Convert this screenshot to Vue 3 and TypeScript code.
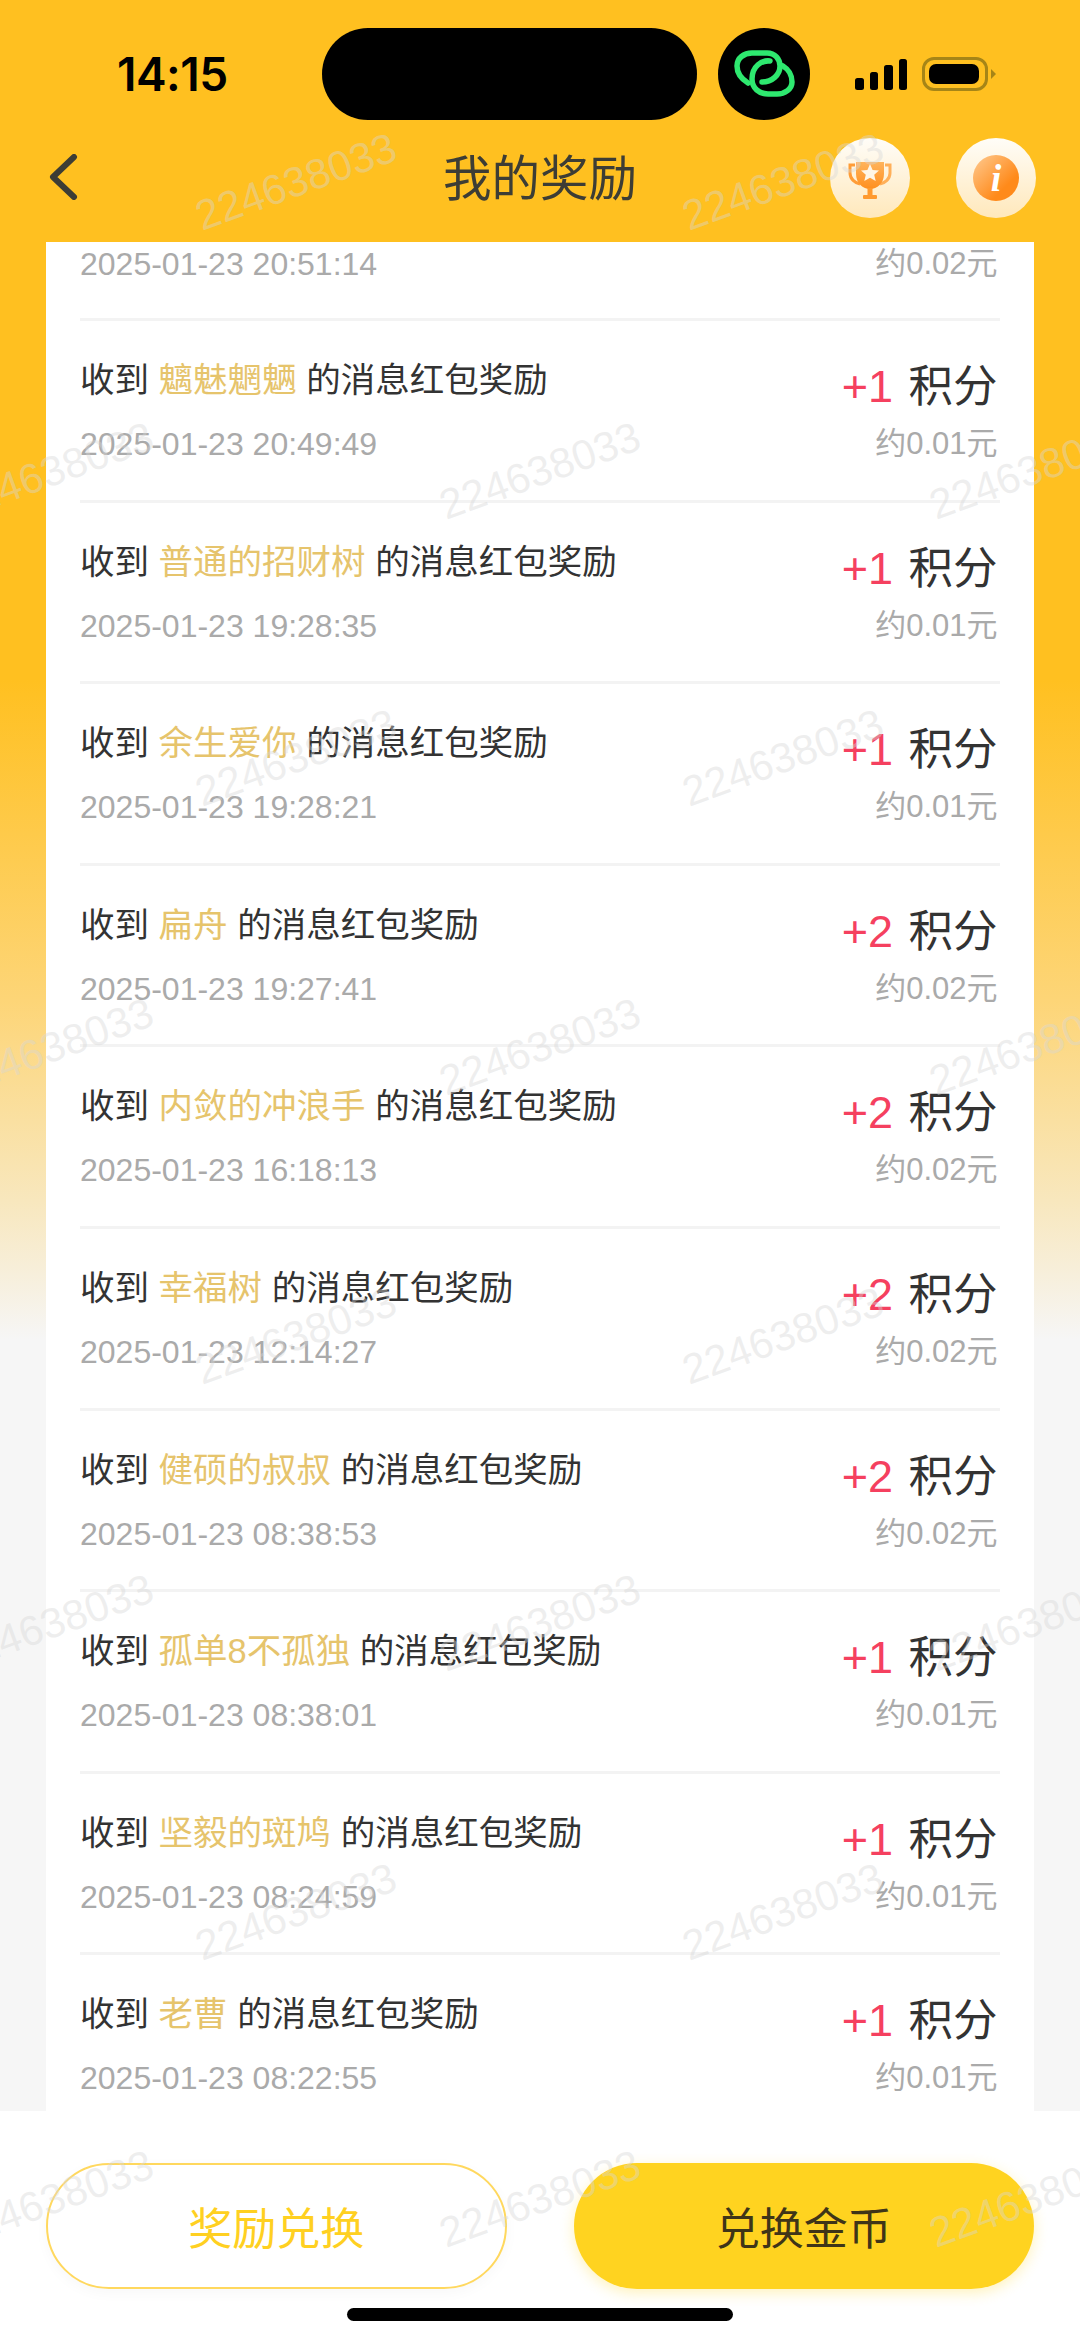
<template>
  <div class="page">
    <!-- Status bar -->
    <div class="status">
      <span class="clock">14:15</span>
      <div class="island"></div>
      <div class="island-dot">
        <svg viewBox="0 0 92 92" fill="none" stroke="#2ee86f" stroke-width="5.500" stroke-linecap="round">
          <path d="M30 55C22 50 19 44 19 38C19 30 26 25 34 25H49C57 25 62 31 62 38C62 47 54 54 44 54" />
          <path d="M52 33C44 32 34 38 34 51C34 60 41 66 50 66H59C67 66 74 61 74 54C74 47 70 41 65 38" />
        </svg>
      </div>
      <div class="signal">
        <i v-for="h in signalBars" :key="h" :style="{ height: h + 'px' }"></i>
      </div>
      <div class="battery"><b></b></div>
      <div class="battery-nub"></div>
    </div>

    <!-- Nav -->
    <div class="nav">
      <svg class="back" viewBox="0 0 30 46" fill="none" stroke="#3d3d35" stroke-width="6" stroke-linecap="round" stroke-linejoin="round">
        <path d="M26 3L5 23L26 43" />
      </svg>
      <h1 class="title">我的奖励</h1>
      <div class="nav-btns">
        <button class="round">
          <svg viewBox="0 0 80 80">
            <defs>
              <linearGradient id="cup" x1="0" y1="0" x2="0" y2="1">
                <stop offset="0" stop-color="#ffb45c" />
                <stop offset="1" stop-color="#ff8f1f" />
              </linearGradient>
            </defs>
            <path d="M25 27H20V35C20 41 25 45 30 46" fill="none" stroke="#ff9d38" stroke-width="3" />
            <path d="M55 27H60V35C60 41 55 45 50 46" fill="none" stroke="#ffb05a" stroke-width="3" />
            <path d="M26 24H54V36C54 45 47 51 40 51C33 51 26 45 26 36Z" fill="url(#cup)" />
            <rect x="37.500" y="50" width="5" height="8" fill="#ff9a2e" />
            <rect x="33" y="57" width="14" height="4" rx="1" fill="#ff9a2e" />
            <path d="M40 26L42.600 32L49 32.600L44.200 36.800L45.700 43L40 39.700L34.300 43L35.800 36.800L31 32.600L37.400 32Z" fill="#fff6e6" />
          </svg>
        </button>
        <button class="round">
          <span class="info">i</span>
        </button>
      </div>
    </div>

    <!-- Records -->
    <div class="card">
      <div class="row row-cut">
        <span class="time">2025-01-23 20:51:14</span>
        <span class="money">约0.02元</span>
      </div>
      <div v-for="r in records" :key="r.time" class="row">
        <div class="left">
          <div class="desc">收到 <span class="name">{{ r.name }}</span> 的消息红包奖励</div>
          <div class="time">{{ r.time }}</div>
        </div>
        <div class="right">
          <div class="points"><span class="plus">+{{ r.points }}</span> 积分</div>
          <div class="money">约0.0{{ r.points }}元</div>
        </div>
      </div>
    </div>

    <!-- Bottom -->
    <div class="footer">
      <div class="actions">
        <button class="btn btn-line">奖励兑换</button>
        <button class="btn btn-solid">兑换金币</button>
      </div>
      <div class="home"></div>
    </div>

    <span
      v-for="m in marks"
      :key="m.x + '-' + m.y"
      class="mark"
      :style="{ left: m.x + 'px', top: m.y + 'px' }"
    >224638033</span>
  </div>
</template>

<script setup lang="ts">
interface RewardRecord {
  name: string
  time: string
  points: number
}

const signalBars = [12, 18, 25, 31]

const records: RewardRecord[] = [
  { name: '魑魅魍魉', time: '2025-01-23 20:49:49', points: 1 },
  { name: '普通的招财树', time: '2025-01-23 19:28:35', points: 1 },
  { name: '余生爱你', time: '2025-01-23 19:28:21', points: 1 },
  { name: '扁舟', time: '2025-01-23 19:27:41', points: 2 },
  { name: '内敛的冲浪手', time: '2025-01-23 16:18:13', points: 2 },
  { name: '幸福树', time: '2025-01-23 12:14:27', points: 2 },
  { name: '健硕的叔叔', time: '2025-01-23 08:38:53', points: 2 },
  { name: '孤单8不孤独', time: '2025-01-23 08:38:01', points: 1 },
  { name: '坚毅的斑鸠', time: '2025-01-23 08:24:59', points: 1 },
  { name: '老曹', time: '2025-01-23 08:22:55', points: 1 },
]

// watermark centres, repeating tile
const marks: { x: number; y: number }[] = []
for (const y of [182, 758, 1336, 1912]) {
  for (const x of [296, 783]) marks.push({ x, y })
}
for (const y of [471, 1047, 1623, 2199]) {
  for (const x of [53, 540, 1030]) marks.push({ x, y })
}
</script>

<style>
html,
body {
  margin: 0;
  background: #fff;
}
</style>

<style scoped>
.page {
  position: relative;
  width: 1080px;
  height: 2341px;
  overflow: hidden;
  display: flex;
  flex-direction: column;
  background: linear-gradient(180deg, #ffc020 0, #ffc020 680px, #fdd577 1000px, #f8e7bd 1200px, #f6f6f6 1340px);
  font-family: "Liberation Sans", "Noto Sans CJK SC", sans-serif;
  color: #333;
}

/* Status bar */
.status {
  display: flex;
  align-items: center;
  height: 92px;
  padding: 28px 0 0 117px;
  flex-shrink: 0;
}

.clock {
  width: 205px;
  font-family: Inter, sans-serif;
  font-size: 46px;
  font-weight: 600;
  color: #000;
  letter-spacing: -0.5px;
}

.island {
  width: 375px;
  height: 92px;
  border-radius: 46px;
  background: #000;
}

.island-dot {
  width: 92px;
  height: 92px;
  margin-left: 21px;
  border-radius: 50%;
  background: #000;
}

.island-dot svg {
  display: block;
  width: 92px;
  height: 92px;
}

.signal {
  display: flex;
  align-items: flex-end;
  gap: 6px;
  margin-left: 45px;
}

.signal i {
  display: block;
  width: 8.500px;
  border-radius: 2.500px;
  background: #000;
}

.battery {
  box-sizing: border-box;
  width: 66px;
  height: 34px;
  margin-left: 15px;
  padding: 4px;
  border: 3px solid #a68517;
  border-radius: 12px;
}

.battery b {
  display: block;
  width: 50px;
  height: 20px;
  border-radius: 7px;
  background: #000;
}

.battery-nub {
  width: 0;
  height: 0;
  margin-left: 3px;
  border-left: 5px solid #a68517;
  border-top: 5px solid transparent;
  border-bottom: 5px solid transparent;
}

/* Nav */
.nav {
  position: relative;
  display: flex;
  align-items: center;
  justify-content: center;
  height: 122px;
  flex-shrink: 0;
}

.back {
  position: absolute;
  left: 48px;
  top: 34px;
  width: 30px;
  height: 46px;
}

.title {
  margin: 0 0 12px;
  font-size: 48.500px;
  font-weight: 400;
  color: #3d3d35;
}

.nav-btns {
  position: absolute;
  right: 44px;
  top: 18px;
  display: flex;
  gap: 46px;
}

.round {
  display: flex;
  align-items: center;
  justify-content: center;
  width: 80px;
  height: 80px;
  padding: 0;
  border: 0;
  border-radius: 50%;
  background: linear-gradient(180deg, #fffdf8, #ffe8bb);
}

.round svg {
  display: block;
  width: 80px;
  height: 80px;
}

.info {
  width: 46px;
  height: 46px;
  border-radius: 50%;
  background: linear-gradient(135deg, #ffcb92, #ff8a1a 70%);
  color: #fff;
  font-family: "Liberation Serif", serif;
  font-size: 38px;
  font-style: italic;
  font-weight: 700;
  line-height: 46px;
  text-align: center;
}

/* Records */
.card {
  flex: 1;
  min-height: 0;
  margin: 0 46px;
  padding: 0 34px;
  overflow: hidden;
  background: #fff;
}

.row {
  box-sizing: border-box;
  display: flex;
  justify-content: space-between;
  height: 181.600px;
  padding-top: 37px;
  border-bottom: 3px solid #f3f3f3;
}

.row-cut {
  height: 79px;
  padding-top: 0;
  align-items: flex-start;
}

.desc {
  font-size: 34.500px;
  line-height: 44px;
  color: #333;
  white-space: nowrap;
}

.name {
  color: #e6c46c;
}

.time {
  display: block;
  margin-top: 22px;
  font-size: 32px;
  line-height: 40px;
  color: #aaa;
  white-space: nowrap;
}

.row-cut .time,
.row-cut .money {
  margin-top: 2px;
}

.right {
  padding-right: 2.500px;
  text-align: right;
}

.row-cut .money {
  padding-right: 2.500px;
}

.points {
  margin-top: 4px;
  font-size: 44.500px;
  line-height: 50px;
  color: #333;
  word-spacing: 3px;
}

.plus {
  font-size: 45px;
  color: #f5405f;
}

.money {
  margin-top: 12px;
  font-size: 31px;
  line-height: 40px;
  color: #aaa;
}

/* Bottom */
.footer {
  position: relative;
  height: 230px;
  flex-shrink: 0;
  background: #fff;
}

.actions {
  display: grid;
  grid-template-columns: 1fr 1fr;
  gap: 67px;
  padding: 52px 46px 0;
}

.btn {
  height: 126px;
  padding: 0;
  border-radius: 63px;
  font-family: inherit;
  font-size: 44px;
}

.btn-line {
  border: 2px solid #ffd85e;
  background: #fff;
  color: #ffd021;
  box-shadow: 0 4px 14px rgba(0, 0, 0, 0.03);
}

.btn-solid {
  border: 0;
  background: #ffd320;
  color: #3f3518;
  box-shadow: 0 4px 14px rgba(255, 211, 32, 0.3);
}

.home {
  width: 386px;
  height: 13px;
  margin: 19px auto 0;
  border-radius: 7px;
  background: #000;
}

/* Watermark */
.mark {
  position: absolute;
  transform: translate(-50%, -50%) rotate(-20deg);
  font-size: 42px;
  line-height: 1;
  color: rgba(215, 215, 215, 0.42);
  pointer-events: none;
  white-space: nowrap;
}
</style>
